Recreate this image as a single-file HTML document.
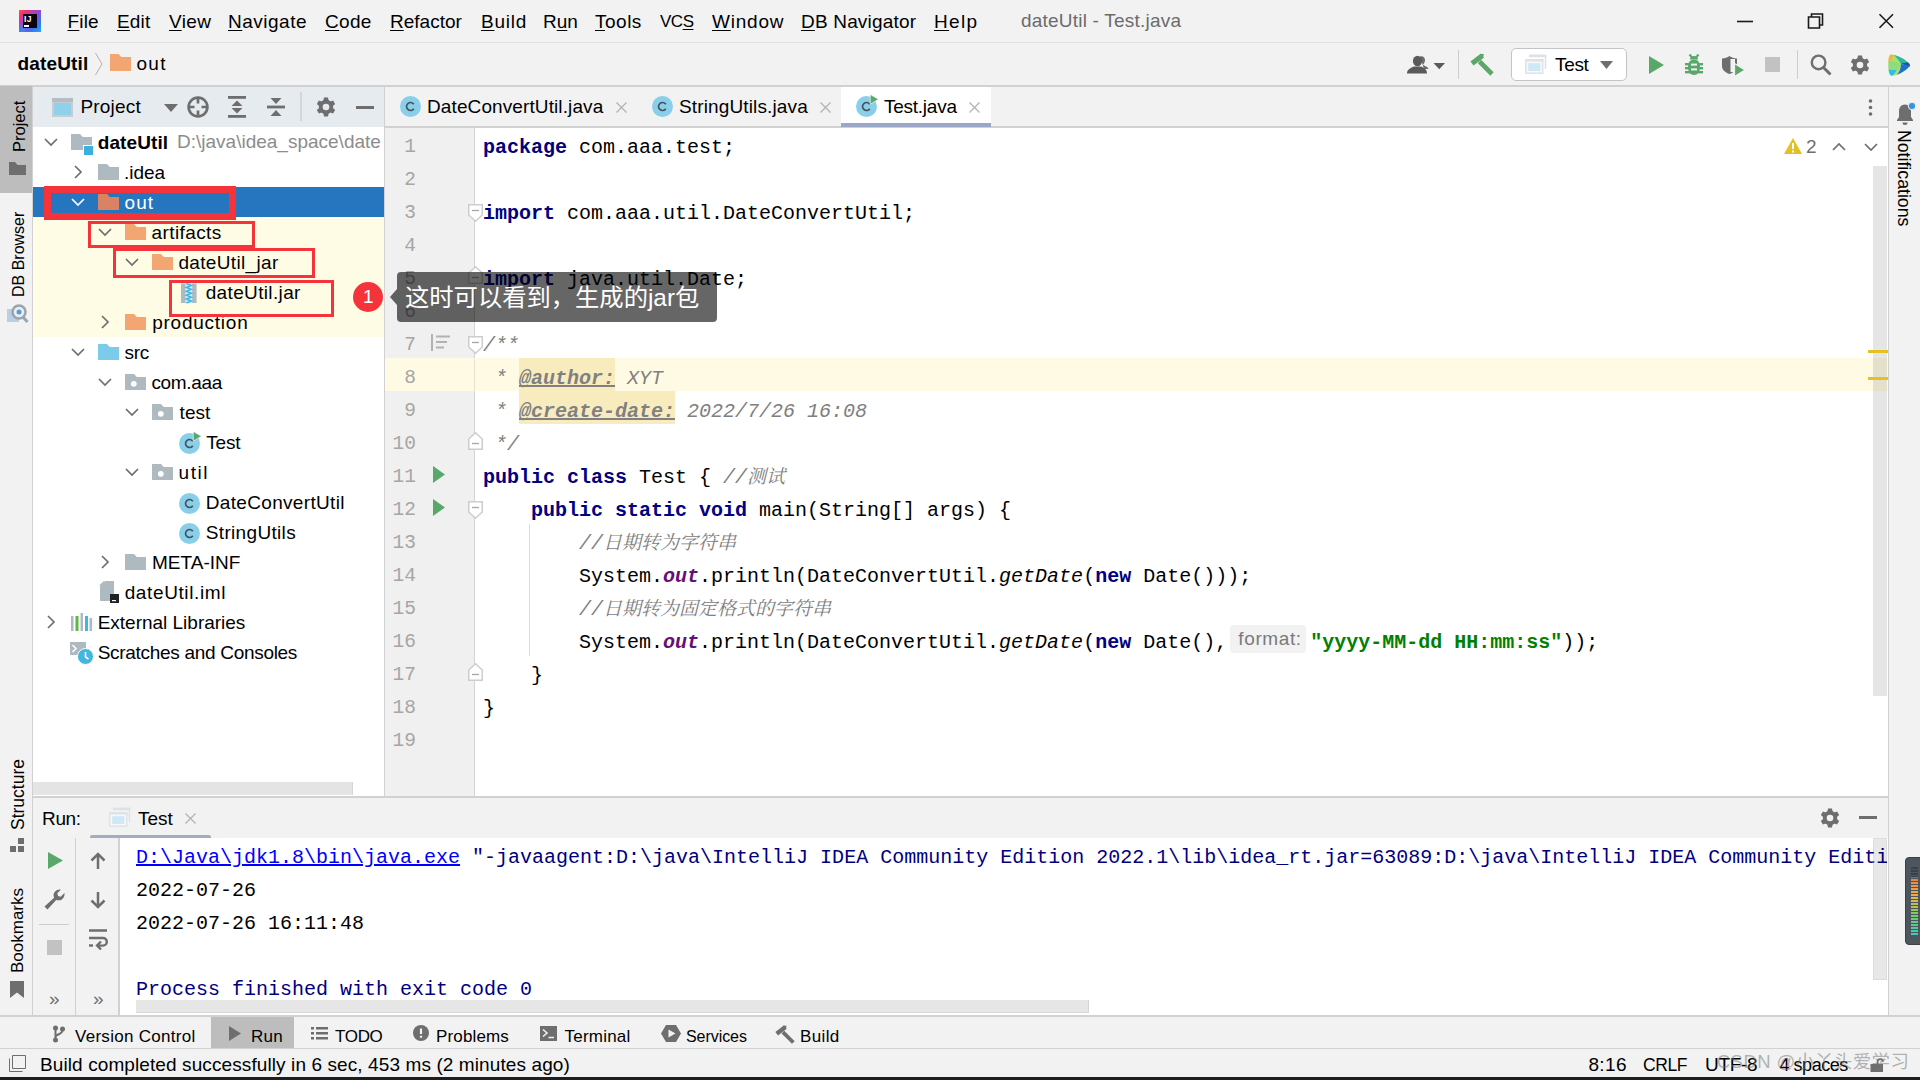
<!DOCTYPE html>
<html><head><meta charset="utf-8"><title>dateUtil - Test.java</title>
<style>
*{box-sizing:border-box;margin:0;padding:0}
html,body{width:1920px;height:1080px;overflow:hidden;background:#f2f2f2}
body{position:relative;font-family:"Liberation Sans","Noto Sans CJK SC",sans-serif;color:#000;font-size:18px}
.t{position:absolute;white-space:pre;display:block}
.a{position:absolute;display:block}
.b{font-weight:bold}
.g{color:#8c8c8c}
u{text-decoration:underline;text-underline-offset:2px;text-decoration-thickness:1px}
.mono{font-family:"Liberation Mono","Noto Sans Mono CJK SC","Noto Sans CJK SC",monospace}
.code{position:absolute;left:483px;white-space:pre;font-family:"Liberation Mono","Noto Sans Mono CJK SC",monospace;font-size:20px;height:33px;line-height:33px;color:#000}
.code b{color:#000080}
.code i{color:#808080}
.code .s{color:#008000;font-weight:bold}
.code .f{color:#660e7a;font-weight:bold;font-style:italic}
.code .cj{font-family:"Noto Serif CJK SC","Noto Sans CJK SC",serif;font-size:19px;line-height:1px}
.ln{position:absolute;width:30px;left:386px;text-align:right;font-family:"Liberation Mono",monospace;font-size:19.500px;height:33px;line-height:33px;color:#a6a6a6}
.con{position:absolute;left:136px;white-space:pre;font-family:"Liberation Mono",monospace;font-size:20px;height:33px;line-height:33px;color:#000}
.v{position:absolute;white-space:pre;transform-origin:0 0;font-size:17px;height:22px;line-height:22px}
svg{position:absolute;display:block;overflow:visible}
</style></head><body>

<div class="a" style="left:0;top:42px;width:1920px;height:1px;background:#e0e0e0"></div>
<div class="a" style="left:0;top:85px;width:1920px;height:2px;background:#d1d1d1"></div>
<div class="a" style="left:0;top:87px;width:32px;height:929px;background:#f2f2f2"></div>
<div class="a" style="left:0;top:87px;width:32px;height:94px;background:#bdbdbd"></div>
<div class="a" style="left:32px;top:87px;width:1px;height:929px;background:#d1d1d1"></div>
<div class="a" style="left:33px;top:87px;width:351px;height:40px;background:#e6ebf0"></div>
<div class="a" style="left:33px;top:127px;width:351px;height:669px;background:#fff"></div>
<div class="a" style="left:384px;top:87px;width:1px;height:710px;background:#d1d1d1"></div>
<div class="a" style="left:385px;top:87px;width:1503px;height:40px;background:#f2f2f2"></div>
<div class="a" style="left:385px;top:126px;width:1503px;height:2px;background:#d1d1d1"></div>
<div class="a" style="left:385px;top:128px;width:1503px;height:668px;background:#fff"></div>
<div class="a" style="left:385px;top:128px;width:89px;height:668px;background:#f0f0f0"></div>
<div class="a" style="left:474px;top:128px;width:1px;height:668px;background:#d4d4d4"></div>
<div class="a" style="left:1888px;top:87px;width:1px;height:929px;background:#d1d1d1"></div>
<div class="a" style="left:33px;top:796px;width:1855px;height:2px;background:#d1d1d1"></div>
<div class="a" style="left:33px;top:798px;width:1855px;height:40px;background:#f2f2f2"></div>
<div class="a" style="left:120px;top:838px;width:1768px;height:177px;background:#fff"></div>
<div class="a" style="left:75px;top:838px;width:1px;height:177px;background:#d1d1d1"></div>
<div class="a" style="left:118px;top:838px;width:2px;height:177px;background:#d1d1d1"></div>
<div class="a" style="left:0;top:1015px;width:1920px;height:2px;background:#d1d1d1"></div>
<div class="a" style="left:0;top:1048px;width:1920px;height:1px;background:#d1d1d1"></div>
<div class="a" style="left:0;top:1077px;width:1920px;height:3px;background:#1e1e1e"></div>
<div class="a" style="left:19px;top:10px;width:22px;height:22px;background:linear-gradient(135deg,#fd5a3c 0%,#f0307a 18%,#8b4bd8 50%,#2f7df2 78%,#27a6f2 100%)"></div>
<div class="a" style="left:19px;top:22px;width:6px;height:10px;background:linear-gradient(180deg,rgba(47,125,242,0),#2f8cf0)"></div>
<div class="a" style="left:22.500px;top:13.700px;width:14.500px;height:14.300px;background:#0c0410"></div>
<span id="lj" class="t b" style="left:24px;top:13.5px;height:10px;line-height:10px;font-size:8.5px;letter-spacing:0px;color:#fff;letter-spacing:0.300px">IJ</span>
<div class="a" style="left:24px;top:25.400px;width:5px;height:1.500px;background:#fff"></div>
<span id="m1" class="t " style="left:67.5px;top:7.0px;height:30px;line-height:30px;font-size:19px;letter-spacing:0.167px;"><u>F</u>ile</span>
<span id="m2" class="t " style="left:117.0px;top:7.0px;height:30px;line-height:30px;font-size:19px;letter-spacing:0.167px;"><u>E</u>dit</span>
<span id="m3" class="t " style="left:169.0px;top:7.0px;height:30px;line-height:30px;font-size:19px;letter-spacing:0.333px;"><u>V</u>iew</span>
<span id="m4" class="t " style="left:228.0px;top:7.0px;height:30px;line-height:30px;font-size:19px;letter-spacing:0.5px;"><u>N</u>avigate</span>
<span id="m5" class="t " style="left:325.0px;top:7.0px;height:30px;line-height:30px;font-size:19px;letter-spacing:0.333px;"><u>C</u>ode</span>
<span id="m6" class="t " style="left:390.0px;top:7.0px;height:30px;line-height:30px;font-size:19px;letter-spacing:0.0px;"><u>R</u>efactor</span>
<span id="m7" class="t " style="left:481.0px;top:7.0px;height:30px;line-height:30px;font-size:19px;letter-spacing:0.75px;"><u>B</u>uild</span>
<span id="m8" class="t " style="left:543.0px;top:7.0px;height:30px;line-height:30px;font-size:19px;letter-spacing:0.0px;">R<u>u</u>n</span>
<span id="m9" class="t " style="left:595.0px;top:7.0px;height:30px;line-height:30px;font-size:19px;letter-spacing:0.5px;"><u>T</u>ools</span>
<span id="m10" class="t " style="left:660.0px;top:7.0px;height:30px;line-height:30px;font-size:17px;letter-spacing:-0.5px;">VC<u>S</u></span>
<span id="m11" class="t " style="left:712.0px;top:7.0px;height:30px;line-height:30px;font-size:19px;letter-spacing:0.8px;"><u>W</u>indow</span>
<span id="m12" class="t " style="left:801.0px;top:7.0px;height:30px;line-height:30px;font-size:19px;letter-spacing:0.182px;"><u>D</u>B Navigator</span>
<span id="m13" class="t " style="left:934.0px;top:7.0px;height:30px;line-height:30px;font-size:19px;letter-spacing:1.333px;"><u>H</u>elp</span>
<span id="title" class="t " style="left:1021.0px;top:6.0px;height:30px;line-height:30px;font-size:19px;letter-spacing:0.211px;color:#6b6b6b">dateUtil - Test.java</span>
<svg style="left:1730px;top:8px" width="180" height="28" viewBox="0 0 180 28"><g fill="none" stroke="#1a1a1a" stroke-width="1.600"><path d="M7 13.500H23"/><path d="M78.500 9h11v11h-11z"/><path d="M81.500 9v-3h11v11h-3"/><path d="M149.500 6.200l13.500 13.500M163 6.200l-13.500 13.500"/></g></svg>
<span id="nav1" class="t b" style="left:17.5px;top:49.0px;height:30px;line-height:30px;font-size:19px;letter-spacing:0.143px;">dateUtil</span>
<svg style="left:94px;top:52px" width="10" height="24" viewBox="0 0 10 24"><path d="M1.5 1L8 12L1.5 23" fill="none" stroke="#b0b0b0" stroke-width="1"/></svg>
<svg style="left:109.500px;top:54px" width="21" height="17" viewBox="0 0 21 17"><path d="M0 0h8.500l2.800 3H21v14H0z" fill="#f4a672"/></svg>
<span id="nav2" class="t " style="left:136.5px;top:49.0px;height:30px;line-height:30px;font-size:19px;letter-spacing:1.25px;">out</span>
<svg style="left:1407px;top:55px" width="38" height="20" viewBox="0 0 38 20"><g fill="#6e6e6e"><path d="M13 1.500c2-1 5 0 5 3.500 0 2-1 3.500-2 4.500 2 2 5 2 5.500 4.500H17z"/></g><g fill="#5a5a5a"><ellipse cx="10.500" cy="6" rx="4.600" ry="5.200"/><path d="M0 18.500c0-4.500 4-5.500 7-7h7c3 1.500 6 2.500 6 7z"/><path d="M26.500 8h11.500l-5.750 6.200z"/></g></svg>
<div class="a" style="left:1458px;top:50px;width:1px;height:29px;background:#cdcdcd"></div>
<svg style="left:1469px;top:53px" width="26" height="24" viewBox="0 0 26 24"><g stroke="#59a869" fill="none"><path d="M3 10.500L13.500 2.500" stroke-width="5.200"/><path d="M10.500 8.500L23 21" stroke-width="4.600"/></g><path d="M11 1h4l-1 3z" fill="#59a869"/></svg>
<div class="a" style="left:1511px;top:48px;width:116px;height:33px;background:#fff;border:1px solid #c4c4c4;border-radius:5px"></div>
<svg style="left:1525px;top:54px" width="22" height="20" viewBox="0 0 22 20"><path d="M4.500 1.500H20.500V15" fill="none" stroke="#dde1e6" stroke-width="1.500"/><rect x="4" y="0.800" width="17.200" height="2.400" fill="#dde1e6"/><rect x="0.750" y="5.750" width="17" height="13.500" fill="#f7f8f9" stroke="#dfe3e8" stroke-width="1.500"/><rect x="0" y="5" width="18.500" height="2.600" fill="#dfe3e8"/><rect x="3.200" y="9.200" width="12.200" height="7.800" fill="#cfe8f5"/></svg>
<span id="tbtest" class="t " style="left:1555.0px;top:50.0px;height:30px;line-height:30px;font-size:19px;letter-spacing:-0.333px;">Test</span>
<svg style="left:1600px;top:61px" width="13" height="8" viewBox="0 0 13 8"><path d="M0 0h13l-6.500 8z" fill="#6e6e6e"/></svg>
<svg style="left:1649px;top:56px" width="15" height="18" viewBox="0 0 15 18"><path d="M0 0L15 9.0L0 18z" fill="#59a869"/></svg>
<svg style="left:1685px;top:54px" width="18" height="22" viewBox="0 0 18 22"><g fill="#59a869"><path d="M9 5.500c4 0 6 3 6 7.500s-2.500 8-6 8-6-3.500-6-8 2-7.500 6-7.500z"/><path d="M5 5.500a4 3.500 0 0 1 8 0z"/><rect x="0" y="9" width="18" height="2.400"/><rect x="0" y="13" width="18" height="2.400"/><rect x="0" y="17" width="18" height="2.400"/></g><g stroke="#59a869" stroke-width="2" fill="none"><path d="M4.500 0.500l2.500 3M13.500 0.500l-2.500 3"/></g><g fill="#f2f2f2"><rect x="6" y="9.600" width="6" height="2"/><rect x="6" y="14.400" width="6" height="2"/></g></svg>
<svg style="left:1722px;top:56px" width="24" height="22" viewBox="0 0 24 22"><path d="M0 2.500c3 0 5.500-1 7.500-2.500 2 1.500 4.500 2.500 7.500 2.500v7.500c0 4-3.500 6.500-7.500 8-4-1.500-7.500-4-7.500-8z" fill="#6e6e6e"/><path d="M8.500 3h4.500v13l-4.500 0z" fill="#f2f2f2"/><path d="M12.500 7.500L23 14 12.500 20.500z" fill="#59a869" stroke="#f2f2f2" stroke-width="1.200"/></svg>
<div class="a" style="left:1765px;top:57px;width:15px;height:15px;background:#c2c2c2"></div>
<div class="a" style="left:1797px;top:50px;width:1px;height:29px;background:#cdcdcd"></div>
<svg style="left:1810px;top:54px" width="22" height="22" viewBox="0 0 22 22"><circle cx="8.600" cy="8.400" r="6.800" fill="none" stroke="#6e6e6e" stroke-width="2.400"/><path d="M13.500 13.500l7 7" stroke="#6e6e6e" stroke-width="3"/></svg>
<svg style="left:1850px;top:55px" width="20" height="20" viewBox="0 0 20 20"><path d="M7.41 3.50L7.98 0.62L12.02 0.62L12.59 3.50L14.33 4.50L17.12 3.56L19.14 7.06L16.93 9.00L16.93 11.00L19.14 12.94L17.12 16.44L14.33 15.50L12.59 16.50L12.02 19.38L7.98 19.38L7.41 16.50L5.67 15.50L2.88 16.44L0.86 12.94L3.07 11.00L3.07 9.00L0.86 7.06L2.88 3.56L5.67 4.50z" fill="#6e6e6e"/><circle cx="10" cy="10" r="7.200" fill="#6e6e6e"/><circle cx="10" cy="10" r="3.300" fill="#f2f2f2"/></svg>
<svg style="left:1888px;top:54px" width="22" height="22" viewBox="0 0 22 22"><defs><clipPath id="lg"><path d="M3.500 0.500C10 1 18 6 21.500 10c0.500 0.800 0.500 1.500 0 2.200C18 17 9 21.500 4 21.800 1.500 21.500 0.500 19 0.500 11S1 1 3.500 0.500z"/></clipPath></defs><g clip-path="url(#lg)"><rect width="22" height="22" fill="#a6e06e"/><path d="M0 0h6l-3 7H0z" fill="#f5b33a"/><path d="M5 0h17v11L13 10C11 6 8 3 5 0z" fill="#2fb5a0"/><path d="M13 9.500L22 8v5z" fill="#1d4fb0"/><path d="M13 10l9 2v10H8c3-3 5-7 5-12z" fill="#1f6fd0"/><path d="M0 15c3 1 6 1 9 0-1 3-3 5-5 7H0z" fill="#35b8ea"/><path d="M0 7c4 0 9 1 13 3-1 3-3 5-5 6-3 0-6 0-8-1z" fill="#8fdc7c"/></g></svg>
<div class="a" style="left:0;top:86px;width:32px;height:107px;background:#bdbdbd"></div>
<span id="vproj" class="v" style="left:8px;top:152px;transform:rotate(-90deg);font-size:16.5px;letter-spacing:0px;">Project</span>
<svg style="left:9px;top:162px" width="17" height="13" viewBox="0 0 17 13"><path d="M0 0h6l2.500 3H17v10H0z" fill="#6e6e6e"/></svg>
<span id="vdb" class="v" style="left:8px;top:297px;transform:rotate(-90deg);font-size:16px;letter-spacing:0px;">DB Browser</span>
<svg style="left:7px;top:303px" width="21" height="21" viewBox="0 0 21 21"><rect x="0" y="6" width="12" height="13" fill="#b9cfe6"/><circle cx="12" cy="9" r="6.500" fill="#e8eef5" stroke="#9aa4ae" stroke-width="2.500"/><circle cx="12" cy="9" r="2.500" fill="#5b9bd5"/><path d="M16 14l4.500 5" stroke="#9aa4ae" stroke-width="3"/></svg>
<span id="vstruct" class="v" style="left:7px;top:830px;transform:rotate(-90deg);font-size:17.5px;letter-spacing:0px;">Structure</span>
<svg style="left:10px;top:838px" width="15" height="15" viewBox="0 0 15 15"><g fill="#6e6e6e"><rect x="8" y="0" width="6" height="6"/><rect x="0" y="8" width="6" height="6"/><rect x="8" y="8" width="6" height="6"/></g></svg>
<span id="vbook" class="v" style="left:7px;top:973px;transform:rotate(-90deg);font-size:17px;letter-spacing:0px;">Bookmarks</span>
<svg style="left:10px;top:981px" width="14" height="17" viewBox="0 0 14 17"><path d="M0 0h14v17l-7-5.500-7 5.500z" fill="#6e6e6e"/></svg>
<svg style="left:52px;top:98px" width="21" height="19" viewBox="0 0 21 19"><rect x="0" y="0" width="21" height="19" fill="#c9cdd1"/><rect x="0" y="0" width="21" height="4" fill="#b4bcc4"/><rect x="2" y="5" width="17" height="12" fill="#8fd1ea"/></svg>
<span id="ph" class="t " style="left:80.5px;top:92.0px;height:30px;line-height:30px;font-size:19px;letter-spacing:0.183px;">Project</span>
<svg style="left:164px;top:104px" width="14" height="8" viewBox="0 0 14 8"><path d="M0 0h14l-7 8z" fill="#6e6e6e"/></svg>
<svg style="left:187px;top:96px" width="22" height="22" viewBox="0 0 22 22"><circle cx="11" cy="11" r="9.400" fill="none" stroke="#6e6e6e" stroke-width="2.700"/><path d="M11 1v6.500M11 14.500v6.500M1 11h6.500M14.500 11h6.500" stroke="#6e6e6e" stroke-width="2.700"/></svg>
<svg style="left:228px;top:96px" width="18" height="22" viewBox="0 0 18 22"><g fill="#6e6e6e"><rect x="0" y="0" width="18" height="2.800"/><rect x="0" y="19" width="18" height="2.800"/><path d="M9 4.500l5.500 5.500h-11z"/><path d="M9 17.500l5.500-5.500h-11z"/></g></svg>
<svg style="left:267px;top:96px" width="18" height="22" viewBox="0 0 18 22"><g fill="#6e6e6e"><rect x="0" y="9.600" width="18" height="2.800"/><path d="M9 8l5.500-6h-11z"/><path d="M9 14l5.500 6h-11z"/></g></svg>
<div class="a" style="left:300px;top:92px;width:2px;height:29px;background:#d3d7dc"></div>
<svg style="left:316px;top:97px" width="20" height="20" viewBox="0 0 20 20"><path d="M7.41 3.50L7.98 0.62L12.02 0.62L12.59 3.50L14.33 4.50L17.12 3.56L19.14 7.06L16.93 9.00L16.93 11.00L19.14 12.94L17.12 16.44L14.33 15.50L12.59 16.50L12.02 19.38L7.98 19.38L7.41 16.50L5.67 15.50L2.88 16.44L0.86 12.94L3.07 11.00L3.07 9.00L0.86 7.06L2.88 3.56L5.67 4.50z" fill="#6e6e6e"/><circle cx="10" cy="10" r="7.200" fill="#6e6e6e"/><circle cx="10" cy="10" r="3.300" fill="#e6ebf0"/></svg>
<div class="a" style="left:356px;top:105.500px;width:18px;height:3px;background:#6e6e6e"></div>
<div class="a" style="left:33px;top:187px;width:351px;height:30px;background:#2675bf"></div>
<div class="a" style="left:33px;top:217px;width:351px;height:120px;background:#fffce6"></div>
<svg style="left:44px;top:138px" width="14" height="9" viewBox="0 0 14 9"><path d="M1 1l6 6 6-6" fill="none" stroke="#6e6e6e" stroke-width="1.700"/></svg><svg style="left:70.5px;top:134px" width="21" height="16" viewBox="0 0 21 16"><path d="M0 0h9l2.800 3H21v13H0z" fill="#aeb9c0"/></svg><div class="a" style="left:83px;top:145px;width:11px;height:11px;background:#3bb0dc;border:1px solid #fff"></div><span id="t0" class="t b" style="left:97.7px;top:127.6px;height:30px;line-height:30px;font-size:19px;letter-spacing:0.1px;">dateUtil</span>
<span id="t0p" class="t " style="left:177px;top:127.0px;height:30px;line-height:30px;font-size:19px;letter-spacing:0px;color:#8c8c8c;width:206px;overflow:hidden">D:\java\idea_space\date</span>
<svg style="left:74px;top:165px" width="9" height="14" viewBox="0 0 9 14"><path d="M1 1l6 6-6 6" fill="none" stroke="#6e6e6e" stroke-width="1.700"/></svg><svg style="left:97.5px;top:164px" width="21" height="16" viewBox="0 0 21 16"><path d="M0 0h9l2.800 3H21v13H0z" fill="#aeb9c0"/></svg><span id="t1" class="t " style="left:124.0px;top:157.6px;height:30px;line-height:30px;font-size:19px;letter-spacing:-0.025px;">.idea</span>
<svg style="left:71px;top:198px" width="14" height="9" viewBox="0 0 14 9"><path d="M1 1l6 6 6-6" fill="none" stroke="#fff" stroke-width="1.700"/></svg><svg style="left:97.5px;top:194px" width="21" height="16" viewBox="0 0 21 16"><path d="M0 0h9l2.800 3H21v13H0z" fill="#d98264"/></svg><span id="t2" class="t " style="left:124.6px;top:187.6px;height:30px;line-height:30px;font-size:19px;letter-spacing:1.0px;color:#fff">out</span>
<svg style="left:98px;top:228px" width="14" height="9" viewBox="0 0 14 9"><path d="M1 1l6 6 6-6" fill="none" stroke="#6e6e6e" stroke-width="1.700"/></svg><svg style="left:124.5px;top:224px" width="21" height="16" viewBox="0 0 21 16"><path d="M0 0h9l2.800 3H21v13H0z" fill="#f4a672"/></svg><span id="t3" class="t " style="left:151.6px;top:217.6px;height:30px;line-height:30px;font-size:19px;letter-spacing:0.387px;">artifacts</span>
<svg style="left:125px;top:258px" width="14" height="9" viewBox="0 0 14 9"><path d="M1 1l6 6 6-6" fill="none" stroke="#6e6e6e" stroke-width="1.700"/></svg><svg style="left:151.5px;top:254px" width="21" height="16" viewBox="0 0 21 16"><path d="M0 0h9l2.800 3H21v13H0z" fill="#f4a672"/></svg><span id="t4" class="t " style="left:178.4px;top:247.60000000000002px;height:30px;line-height:30px;font-size:19px;letter-spacing:0.345px;">dateUtil_jar</span>
<svg style="left:181.2px;top:283px" width="15.600" height="20.500" viewBox="0 0 16 20"><rect width="16" height="20" fill="#aeb9c0"/><rect x="4.500" width="7" height="20" fill="#cfeefa"/><path d="M5.500 0l5 2-5 2 5 2-5 2 5 2-5 2 5 2-5 2 5 2-5 2" stroke="#40b6e0" stroke-width="1.600" fill="none"/></svg><span id="t5" class="t " style="left:205.7px;top:277.6px;height:30px;line-height:30px;font-size:19px;letter-spacing:0.355px;">dateUtil.jar</span>
<svg style="left:101px;top:315px" width="9" height="14" viewBox="0 0 9 14"><path d="M1 1l6 6-6 6" fill="none" stroke="#6e6e6e" stroke-width="1.700"/></svg><svg style="left:124.5px;top:314px" width="21" height="16" viewBox="0 0 21 16"><path d="M0 0h9l2.800 3H21v13H0z" fill="#f4a672"/></svg><span id="t6" class="t " style="left:152.2px;top:307.6px;height:30px;line-height:30px;font-size:19px;letter-spacing:0.756px;">production</span>
<svg style="left:71px;top:348px" width="14" height="9" viewBox="0 0 14 9"><path d="M1 1l6 6 6-6" fill="none" stroke="#6e6e6e" stroke-width="1.700"/></svg><svg style="left:97.5px;top:344px" width="21" height="16" viewBox="0 0 21 16"><path d="M0 0h9l2.800 3H21v13H0z" fill="#7ccbeb"/></svg><span id="t7" class="t " style="left:124.6px;top:337.6px;height:30px;line-height:30px;font-size:19px;letter-spacing:-0.35px;">src</span>
<svg style="left:98px;top:378px" width="14" height="9" viewBox="0 0 14 9"><path d="M1 1l6 6 6-6" fill="none" stroke="#6e6e6e" stroke-width="1.700"/></svg><svg style="left:124.5px;top:374px" width="21" height="16" viewBox="0 0 21 16"><path d="M0 0h9l2.800 3H21v13H0z" fill="#aeb9c0"/><circle cx="8.800" cy="9.800" r="2.900" fill="#fff"/></svg><span id="t8" class="t " style="left:151.4px;top:367.6px;height:30px;line-height:30px;font-size:19px;letter-spacing:-0.333px;">com.aaa</span>
<svg style="left:125px;top:408px" width="14" height="9" viewBox="0 0 14 9"><path d="M1 1l6 6 6-6" fill="none" stroke="#6e6e6e" stroke-width="1.700"/></svg><svg style="left:151.5px;top:404px" width="21" height="16" viewBox="0 0 21 16"><path d="M0 0h9l2.800 3H21v13H0z" fill="#aeb9c0"/><circle cx="8.800" cy="9.800" r="2.900" fill="#fff"/></svg><span id="t9" class="t " style="left:179.6px;top:397.6px;height:30px;line-height:30px;font-size:19px;letter-spacing:0.033px;">test</span>
<svg style="left:178.5px;top:432.5px" width="21" height="21" viewBox="0 0 21 21"><circle cx="10.500" cy="10.500" r="10.500" fill="#89cfea"/><path d="M13.800 12.800a4 4 0 1 1 0-4.600" fill="none" stroke="#45525c" stroke-width="1.700"/><path d="M14.300 -1.500l8.200 4.800-8.200 4.800z" fill="#59a869" stroke="#fff" stroke-width="0.800" stroke-opacity="0.700"/></svg><span id="t10" class="t " style="left:206.2px;top:427.6px;height:30px;line-height:30px;font-size:19px;letter-spacing:-0.167px;">Test</span>
<svg style="left:125px;top:468px" width="14" height="9" viewBox="0 0 14 9"><path d="M1 1l6 6 6-6" fill="none" stroke="#6e6e6e" stroke-width="1.700"/></svg><svg style="left:151.5px;top:464px" width="21" height="16" viewBox="0 0 21 16"><path d="M0 0h9l2.800 3H21v13H0z" fill="#aeb9c0"/><circle cx="8.800" cy="9.800" r="2.900" fill="#fff"/></svg><span id="t11" class="t " style="left:178.6px;top:457.6px;height:30px;line-height:30px;font-size:19px;letter-spacing:1.533px;">util</span>
<svg style="left:178.5px;top:492.5px" width="21" height="21" viewBox="0 0 21 21"><circle cx="10.500" cy="10.500" r="10.500" fill="#89cfea"/><path d="M13.800 12.800a4 4 0 1 1 0-4.600" fill="none" stroke="#45525c" stroke-width="1.700"/></svg><span id="t12" class="t " style="left:205.8px;top:487.6px;height:30px;line-height:30px;font-size:19px;letter-spacing:0.321px;">DateConvertUtil</span>
<svg style="left:178.5px;top:522.5px" width="21" height="21" viewBox="0 0 21 21"><circle cx="10.500" cy="10.500" r="10.500" fill="#89cfea"/><path d="M13.800 12.800a4 4 0 1 1 0-4.600" fill="none" stroke="#45525c" stroke-width="1.700"/></svg><span id="t13" class="t " style="left:205.8px;top:517.6px;height:30px;line-height:30px;font-size:19px;letter-spacing:0.33px;">StringUtils</span>
<svg style="left:101px;top:555px" width="9" height="14" viewBox="0 0 9 14"><path d="M1 1l6 6-6 6" fill="none" stroke="#6e6e6e" stroke-width="1.700"/></svg><svg style="left:124.5px;top:554px" width="21" height="16" viewBox="0 0 21 16"><path d="M0 0h9l2.800 3H21v13H0z" fill="#aeb9c0"/></svg><span id="t14" class="t " style="left:152.0px;top:547.6px;height:30px;line-height:30px;font-size:19px;letter-spacing:0.014px;">META-INF</span>
<svg style="left:99px;top:581px" width="20" height="22" viewBox="0 0 20 22"><path d="M6 0h9v20H1V5z" fill="#aeb9c0"/><path d="M0 4.500L5 0v4.500z" fill="#aeb9c0"/><rect x="11" y="13" width="9" height="9" fill="#222"/><rect x="13" y="19" width="4" height="1.200" fill="#fff"/></svg><span id="t15" class="t " style="left:124.7px;top:577.6px;height:30px;line-height:30px;font-size:19px;letter-spacing:0.618px;">dateUtil.iml</span>
<svg style="left:47px;top:615px" width="9" height="14" viewBox="0 0 9 14"><path d="M1 1l6 6-6 6" fill="none" stroke="#6e6e6e" stroke-width="1.700"/></svg><svg style="left:70px;top:613px" width="22" height="18" viewBox="0 0 22 18"><g><rect x="1" y="3" width="2.500" height="15" fill="#aeb9c0"/><rect x="5.500" y="3" width="3" height="15" fill="#62b543"/><rect x="10.500" y="0" width="2.500" height="18" fill="#aeb9c0"/><rect x="15" y="3" width="3" height="15" fill="#40b6e0"/><rect x="19.500" y="5" width="2.500" height="13" fill="#aeb9c0"/></g></svg><span id="t16" class="t " style="left:97.7px;top:607.6px;height:30px;line-height:30px;font-size:19px;letter-spacing:-0.012px;">External Libraries</span>
<svg style="left:70px;top:641px" width="24" height="24" viewBox="0 0 24 24"><rect x="0" y="1" width="16" height="13" fill="#aeb9c0"/><path d="M2.500 4l3.500 3.500-3.500 3.500" fill="none" stroke="#fff" stroke-width="1.500"/><circle cx="15.500" cy="15.500" r="8" fill="#40b6e0" stroke="#fff" stroke-width="1"/><path d="M15.500 11v5l3 2" fill="none" stroke="#fff" stroke-width="1.600"/></svg><span id="t17" class="t " style="left:97.7px;top:637.6px;height:30px;line-height:30px;font-size:19px;letter-spacing:-0.3px;">Scratches and Consoles</span>
<div class="a" style="left:33px;top:782px;width:320px;height:13px;background:#e4e4e4;border-right:1px solid #d6d6d6"></div>
<div class="a" style="left:841px;top:87px;width:150px;height:40px;background:#fff"></div>
<div class="a" style="left:841px;top:123px;width:150px;height:4px;background:#9aa7c7"></div>
<svg style="left:399.5px;top:96px" width="21" height="21" viewBox="0 0 21 21"><circle cx="10.500" cy="10.500" r="10.500" fill="#89cfea"/><path d="M13.800 12.800a4 4 0 1 1 0-4.600" fill="none" stroke="#45525c" stroke-width="1.700"/></svg>
<span id="tab1" class="t " style="left:427.0px;top:92.0px;height:30px;line-height:30px;font-size:19px;letter-spacing:0.105px;">DateConvertUtil.java</span>
<svg style="left:616px;top:102px" width="11" height="11" viewBox="0 0 11 11"><path d="M0.500 0.500l10 10M10.500 0.500l-10 10" stroke="#b3b3b3" stroke-width="1.300" fill="none"/></svg>
<svg style="left:651.5px;top:96px" width="21" height="21" viewBox="0 0 21 21"><circle cx="10.500" cy="10.500" r="10.500" fill="#89cfea"/><path d="M13.800 12.800a4 4 0 1 1 0-4.600" fill="none" stroke="#45525c" stroke-width="1.700"/></svg>
<span id="tab2" class="t " style="left:679.0px;top:92.0px;height:30px;line-height:30px;font-size:19px;letter-spacing:0.133px;">StringUtils.java</span>
<svg style="left:820px;top:102px" width="11" height="11" viewBox="0 0 11 11"><path d="M0.500 0.500l10 10M10.500 0.500l-10 10" stroke="#b3b3b3" stroke-width="1.300" fill="none"/></svg>
<svg style="left:855.5px;top:96px" width="21" height="21" viewBox="0 0 21 21"><circle cx="10.500" cy="10.500" r="10.500" fill="#89cfea"/><path d="M13.800 12.800a4 4 0 1 1 0-4.600" fill="none" stroke="#45525c" stroke-width="1.700"/><path d="M14.300 -1.500l8.200 4.800-8.200 4.800z" fill="#59a869" stroke="#fff" stroke-width="0.800" stroke-opacity="0.700"/></svg>
<span id="tab3" class="t " style="left:884.0px;top:92.0px;height:30px;line-height:30px;font-size:19px;letter-spacing:-0.25px;">Test.java</span>
<svg style="left:969px;top:102px" width="11" height="11" viewBox="0 0 11 11"><path d="M0.500 0.500l10 10M10.500 0.500l-10 10" stroke="#b3b3b3" stroke-width="1.300" fill="none"/></svg>
<svg style="left:1868px;top:99px" width="5" height="17" viewBox="0 0 5 17"><g fill="#6e6e6e"><circle cx="2.500" cy="2" r="1.800"/><circle cx="2.500" cy="8.500" r="1.800"/><circle cx="2.500" cy="15" r="1.800"/></g></svg>
<div class="a" style="left:385px;top:358.4px;width:1503px;height:32.600px;background:#fffae3"></div>
<div class="a" style="left:474px;top:359px;width:1px;height:33px;background:#e6e2cf"></div>
<div class="a" style="left:519px;top:358.4px;width:96px;height:32.600px;background:#f8ecbf"></div>
<div class="a" style="left:519px;top:391px;width:156px;height:33px;background:#f8ecbf"></div>
<span class="ln" style="top:131px">1</span>
<span class="ln" style="top:164px">2</span>
<span class="ln" style="top:197px">3</span>
<span class="ln" style="top:230px">4</span>
<span class="ln" style="top:263px">5</span>
<span class="ln" style="top:296px">6</span>
<span class="ln" style="top:329px">7</span>
<span class="ln" style="top:362px">8</span>
<span class="ln" style="top:395px">9</span>
<span class="ln" style="top:428px">10</span>
<span class="ln" style="top:461px">11</span>
<span class="ln" style="top:494px">12</span>
<span class="ln" style="top:527px">13</span>
<span class="ln" style="top:560px">14</span>
<span class="ln" style="top:593px">15</span>
<span class="ln" style="top:626px">16</span>
<span class="ln" style="top:659px">17</span>
<span class="ln" style="top:692px">18</span>
<span class="ln" style="top:725px">19</span>
<div class="code" style="top:131px"><b>package</b> com.aaa.test;</div>
<div class="code" style="top:197px"><b>import</b> com.aaa.util.DateConvertUtil;</div>
<div class="code" style="top:263px"><b>import</b> java.util.Date;</div>
<div class="code" style="top:329px"><i>/**</i></div>
<div class="code" style="top:362px"><i> * <b style="color:#808080;text-decoration:underline;text-decoration-skip-ink:none">@author:</b> XYT</i></div>
<div class="code" style="top:395px"><i> * <b style="color:#808080;text-decoration:underline;text-decoration-skip-ink:none">@create-date:</b> 2022/7/26 16:08</i></div>
<div class="code" style="top:428px"><i> */</i></div>
<div class="code" style="top:461px"><b>public class</b> Test { <i>//<span class="cj">测试</span></i></div>
<div class="code" style="top:494px">    <b>public static void</b> main(String[] args) {</div>
<div class="code" style="top:527px">        <i>//<span class="cj">日期转为字符串</span></i></div>
<div class="code" style="top:560px">        System.<span class="f">out</span>.println(DateConvertUtil.<em>getDate</em>(<b>new</b> Date()));</div>
<div class="code" style="top:593px">        <i>//<span class="cj">日期转为固定格式的字符串</span></i></div>
<div class="code" style="top:626px">        System.<span class="f">out</span>.println(DateConvertUtil.<em>getDate</em>(<b>new</b> Date(),<span style="display:inline-block;width:83px"></span><span class="s">"yyyy-MM-dd HH:mm:ss"</span>));</div>
<div class="code" style="top:659px">    }</div>
<div class="code" style="top:692px">}</div>
<div class="a" style="left:1230px;top:625px;width:76px;height:28px;background:#f2f2f2;border-radius:4px"></div>
<span id="hint" class="t " style="left:1238.3px;top:624.0px;height:30px;line-height:30px;font-size:19px;letter-spacing:0.617px;color:#7a7a7a">format:</span>
<svg style="left:433px;top:466px" width="12" height="17" viewBox="0 0 12 17"><path d="M0 0L12 8.5L0 17z" fill="#59a869"/></svg>
<svg style="left:433px;top:499px" width="12" height="17" viewBox="0 0 12 17"><path d="M0 0L12 8.5L0 17z" fill="#59a869"/></svg>
<svg style="left:468px;top:204px" width="15" height="18" viewBox="0 0 15 18"><path d="M0.750 0.750h13.500v10.200l-6.750 6.300-6.750-6.300z" fill="#fff" stroke="#cdcdcd" stroke-width="1.500"/><path d="M4 6.500h7" stroke="#a6a6a6" stroke-width="1.300"/></svg>
<svg style="left:468px;top:266px" width="15" height="18" viewBox="0 0 15 18"><path d="M0.750 17.250h13.500V7.050l-6.750-6.300-6.750 6.300z" fill="#fff" stroke="#cdcdcd" stroke-width="1.500"/><path d="M4 11.500h7" stroke="#a6a6a6" stroke-width="1.300"/></svg>
<svg style="left:468px;top:336px" width="15" height="18" viewBox="0 0 15 18"><path d="M0.750 0.750h13.500v10.200l-6.750 6.300-6.750-6.300z" fill="#fff" stroke="#cdcdcd" stroke-width="1.500"/><path d="M4 6.500h7" stroke="#a6a6a6" stroke-width="1.300"/></svg>
<svg style="left:468px;top:432px" width="15" height="18" viewBox="0 0 15 18"><path d="M0.750 17.250h13.500V7.050l-6.750-6.300-6.750 6.300z" fill="#fff" stroke="#cdcdcd" stroke-width="1.500"/><path d="M4 11.500h7" stroke="#a6a6a6" stroke-width="1.300"/></svg>
<svg style="left:468px;top:501px" width="15" height="18" viewBox="0 0 15 18"><path d="M0.750 0.750h13.500v10.200l-6.750 6.300-6.750-6.300z" fill="#fff" stroke="#cdcdcd" stroke-width="1.500"/><path d="M4 6.500h7" stroke="#a6a6a6" stroke-width="1.300"/></svg>
<svg style="left:468px;top:663px" width="15" height="18" viewBox="0 0 15 18"><path d="M0.750 17.250h13.500V7.050l-6.750-6.300-6.750 6.300z" fill="#fff" stroke="#cdcdcd" stroke-width="1.500"/><path d="M4 11.500h7" stroke="#a6a6a6" stroke-width="1.300"/></svg>
<svg style="left:431px;top:334px" width="20" height="17" viewBox="0 0 20 17"><g stroke="#b2b2b2" stroke-width="2" fill="none"><path d="M1 0v17M5 2.500h14M5 8h11M5 13.500h8"/></g></svg>
<div class="a" style="left:529px;top:524px;width:1px;height:132px;background:#dcdcdc"></div>
<svg style="left:1784px;top:138px" width="18" height="16" viewBox="0 0 18 16"><path d="M9 0l9 16H0z" fill="#e5c023"/><path d="M9 5v6M9 12.500v2" stroke="#fff" stroke-width="2"/></svg>
<span id="warn" class="t " style="left:1806px;top:132.0px;height:30px;line-height:30px;font-size:19px;letter-spacing:0px;color:#6e6e6e">2</span>
<svg style="left:1832px;top:143px" width="14" height="9" viewBox="0 0 14 9"><path d="M1 1l6 6 6-6" fill="none" stroke="#6e6e6e" stroke-width="1.700"/></svg>
<svg style="left:1832px;top:142px" width="14" height="9" viewBox="0 0 14 9"><rect width="14" height="9" fill="#fff"/><path d="M1 8l6-6 6 6" fill="none" stroke="#6e6e6e" stroke-width="1.700"/></svg>
<svg style="left:1864px;top:143px" width="14" height="9" viewBox="0 0 14 9"><path d="M1 1l6 6 6-6" fill="none" stroke="#6e6e6e" stroke-width="1.700"/></svg>
<div class="a" style="left:1873px;top:166px;width:14px;height:530px;background:rgba(0,0,0,0.1)"></div>
<div class="a" style="left:1868px;top:350px;width:20px;height:3px;background:#e5c023"></div>
<div class="a" style="left:1868px;top:377px;width:20px;height:3px;background:#e5c023"></div>
<svg style="left:1897px;top:102px" width="20" height="24" viewBox="0 0 20 24"><path d="M8 2.500c-3.500 0-6 2.800-6 6.500v6l-2 3v1h16v-1l-2-3V9c0-3.700-2.500-6.500-6-6.500z" fill="#6e6e6e"/><path d="M5.500 20.500h5a2.500 2.500 0 0 1-5 0z" fill="#6e6e6e"/><circle cx="15" cy="4" r="3.700" fill="#3592e4" stroke="#f2f2f2" stroke-width="1"/></svg>
<span id="vnotif" class="v" style="left:1915px;top:130px;transform:rotate(90deg);font-size:17.7px;letter-spacing:0px;">Notifications</span>
<div class="a" style="left:44px;top:186px;width:192px;height:34px;border:7px solid #f5333a"></div>
<div class="a" style="left:88px;top:221px;width:167px;height:27px;border:3px solid #f5333a"></div>
<div class="a" style="left:113px;top:248px;width:202px;height:30px;border:3px solid #f5333a"></div>
<div class="a" style="left:169px;top:280px;width:165px;height:37px;border:3px solid #f5333a"></div>
<div class="a" style="left:353px;top:282px;width:30px;height:30px;border-radius:15px;background:#f5333a"></div>
<span id="one" class="t " style="left:363px;top:282.0px;height:30px;line-height:30px;font-size:19px;letter-spacing:0px;color:#fff">1</span>
<svg style="left:390px;top:289px" width="7" height="16" viewBox="0 0 7 16"><path d="M7 0v16L0 8z" fill="rgba(0,0,0,0.600)"/></svg>
<div class="a" style="left:397px;top:272px;width:320px;height:50px;background:rgba(0,0,0,0.600);border-radius:4px"></div>
<span id="tip" class="t " style="left:405px;top:278.0px;height:40px;line-height:40px;font-size:24.3px;letter-spacing:0px;color:#fff;font-family:'Liberation Sans','Noto Sans CJK SC',sans-serif">这时可以看到，生成的jar包</span>
<span id="runl" class="t " style="left:42.0px;top:804.0px;height:30px;line-height:30px;font-size:19px;letter-spacing:-0.333px;">Run:</span>
<svg style="left:109px;top:807px" width="22" height="20" viewBox="0 0 22 20"><path d="M4.500 1.500H20.500V15" fill="none" stroke="#dde1e6" stroke-width="1.500"/><rect x="4" y="0.800" width="17.200" height="2.400" fill="#dde1e6"/><rect x="0.750" y="5.750" width="17" height="13.500" fill="#f7f8f9" stroke="#dfe3e8" stroke-width="1.500"/><rect x="0" y="5" width="18.500" height="2.600" fill="#dfe3e8"/><rect x="3.200" y="9.200" width="12.200" height="7.800" fill="#cfe8f5"/></svg>
<span id="runt" class="t " style="left:138.0px;top:804.0px;height:30px;line-height:30px;font-size:19px;letter-spacing:0.0px;">Test</span>
<svg style="left:185px;top:813px" width="11" height="11" viewBox="0 0 11 11"><path d="M0.500 0.500l10 10M10.500 0.500l-10 10" stroke="#b3b3b3" stroke-width="1.300" fill="none"/></svg>
<div class="a" style="left:90px;top:834.500px;width:121px;height:3.500px;background:#a4adc0;border-radius:2px 2px 0 0"></div>
<svg style="left:1820px;top:808px" width="20" height="20" viewBox="0 0 20 20"><path d="M7.41 3.50L7.98 0.62L12.02 0.62L12.59 3.50L14.33 4.50L17.12 3.56L19.14 7.06L16.93 9.00L16.93 11.00L19.14 12.94L17.12 16.44L14.33 15.50L12.59 16.50L12.02 19.38L7.98 19.38L7.41 16.50L5.67 15.50L2.88 16.44L0.86 12.94L3.07 11.00L3.07 9.00L0.86 7.06L2.88 3.56L5.67 4.50z" fill="#6e6e6e"/><circle cx="10" cy="10" r="7.200" fill="#6e6e6e"/><circle cx="10" cy="10" r="3.300" fill="#f2f2f2"/></svg>
<div class="a" style="left:1859px;top:815.500px;width:18px;height:3px;background:#6e6e6e"></div>
<svg style="left:48px;top:852px" width="15" height="17" viewBox="0 0 15 17"><path d="M0 0L15 8.5L0 17z" fill="#59a869"/></svg>
<svg style="left:44px;top:889px" width="21" height="21" viewBox="0 0 21 21"><path d="M20.500 5.500a6 6 0 0 1-8.300 5.400L3.500 20.500 0.500 17.500l9.600-8.700A6 6 0 0 1 17 0.600l-3.700 3.700 0.800 2.600 2.600 0.800L20.400 4c0.100 0.500 0.100 1 0.100 1.500z" fill="#6e6e6e"/></svg>
<div class="a" style="left:39px;top:924px;width:30px;height:1px;background:#cdcdcd"></div>
<div class="a" style="left:47px;top:940px;width:15px;height:15px;background:#c2c2c2"></div>
<span id="gg1" class="t " style="left:49px;top:984.0px;height:30px;line-height:30px;font-size:19px;letter-spacing:0px;color:#6e6e6e">&#187;</span>
<span id="gg2" class="t " style="left:93px;top:984.0px;height:30px;line-height:30px;font-size:19px;letter-spacing:0px;color:#6e6e6e">&#187;</span>
<svg style="left:90px;top:852px" width="16" height="18" viewBox="0 0 16 18"><path d="M8 17V2M1.500 8.500L8 2l6.500 6.500" fill="none" stroke="#6e6e6e" stroke-width="2.500"/></svg>
<svg style="left:90px;top:891px" width="16" height="18" viewBox="0 0 16 18"><path d="M8 1v15M1.500 9.500L8 16l6.500-6.500" fill="none" stroke="#6e6e6e" stroke-width="2.500"/></svg>
<svg style="left:89px;top:929px" width="19" height="21" viewBox="0 0 19 21"><g fill="none" stroke="#6e6e6e" stroke-width="2.400"><path d="M0 1.500h18M0 9h14a3.800 3.800 0 0 1 0 7.600h-5M12 12.500l-4 4 4 4"/><path d="M0 16.500h4"/></g></svg>
<div class="con" style="top:841px;color:#00007f;width:1751px;overflow:hidden"><span style="color:#0000ff;text-decoration:underline">D:\Java\jdk1.8\bin\java.exe</span> "-javaagent:D:\java\IntelliJ IDEA Community Edition 2022.1\lib\idea_rt.jar=63089:D:\java\IntelliJ IDEA Community Edition 2022.1\bin"</div>
<div class="con" style="top:874px">2022-07-26</div>
<div class="con" style="top:907px">2022-07-26 16:11:48</div>
<div class="con" style="top:973px;color:#00007f">Process finished with exit code 0</div>
<div class="a" style="left:136px;top:1000px;width:953px;height:13px;background:#e6e6e6;border-right:1px solid #d4d4d4;border-bottom:1px solid #d9d9d9"></div>
<div class="a" style="left:1873px;top:838px;width:14px;height:142px;background:rgba(0,0,0,0.090);border:1px solid rgba(0,0,0,0.050)"></div>
<div class="a" style="left:1905px;top:857px;width:20px;height:88px;background:#4d555e;border-radius:4px;border:1px solid #3a4048"></div>
<div class="a" style="left:1911px;top:867px;width:7px;height:69px;background:repeating-linear-gradient(180deg,rgba(77,85,94,0) 0 2px,#4d555e 2px 3px),linear-gradient(180deg,#3a4048 0%,#3a4048 14%,#e8824a 16%,#e6b84a 45%,#7ac96a 70%,#3fc7c0 100%)"></div>
<div class="a" style="left:211px;top:1017px;width:83px;height:31px;background:#bdbdbd"></div>
<svg style="left:52px;top:1025px" width="14" height="18" viewBox="0 0 14 18"><g fill="none" stroke="#6e6e6e" stroke-width="2"><path d="M3.500 3v12M3.500 12c0-3 7-2 7-7"/></g><g fill="#6e6e6e"><circle cx="3.500" cy="3" r="2.500"/><circle cx="3.500" cy="15" r="2.500"/><circle cx="10.500" cy="4" r="2.500"/></g></svg>
<span id="b1" class="t " style="left:75.0px;top:1021.5px;height:30px;line-height:30px;font-size:17px;letter-spacing:0.286px;">Version Control</span>
<svg style="left:229px;top:1026px" width="12" height="15" viewBox="0 0 12 15"><path d="M0 0L12 7.5L0 15z" fill="#6e6e6e"/></svg>
<span id="b2" class="t " style="left:251.0px;top:1021.5px;height:30px;line-height:30px;font-size:17px;letter-spacing:0.3px;">Run</span>
<svg style="left:311px;top:1027px" width="17" height="13" viewBox="0 0 17 13"><g fill="#6e6e6e"><rect x="0" y="0" width="3" height="2.500"/><rect x="5" y="0" width="12" height="2.500"/><rect x="0" y="5" width="3" height="2.500"/><rect x="5" y="5" width="12" height="2.500"/><rect x="0" y="10" width="3" height="2.500"/><rect x="5" y="10" width="12" height="2.500"/></g></svg>
<span id="b3" class="t " style="left:335.0px;top:1021.5px;height:30px;line-height:30px;font-size:17px;letter-spacing:-0.333px;">TODO</span>
<svg style="left:413px;top:1025px" width="16" height="16" viewBox="0 0 16 16"><circle cx="8" cy="8" r="8" fill="#6e6e6e"/><path d="M8 3.500v5.500M8 10.800v2" stroke="#f2f2f2" stroke-width="2.200"/></svg>
<span id="b4" class="t " style="left:436.0px;top:1021.5px;height:30px;line-height:30px;font-size:17px;letter-spacing:0.143px;">Problems</span>
<svg style="left:540px;top:1026px" width="17" height="15" viewBox="0 0 17 15"><rect width="17" height="15" fill="#6e6e6e"/><path d="M3 3.500l4 3.500-4 3.500M8.500 11.500h5.500" fill="none" stroke="#f2f2f2" stroke-width="1.600"/></svg>
<span id="b5" class="t " style="left:564.6px;top:1021.5px;height:30px;line-height:30px;font-size:17px;letter-spacing:0.2px;">Terminal</span>
<svg style="left:661px;top:1025px" width="20" height="17" viewBox="0 0 20 17"><path d="M5 0h10l5 8.500-5 8.500H5L0 8.500z" fill="#6e6e6e"/><path d="M7.500 4.500l7 4-7 4z" fill="#f2f2f2"/></svg>
<span id="b6" class="t " style="left:686.0px;top:1021.5px;height:30px;line-height:30px;font-size:16px;letter-spacing:-0.057px;">Services</span>
<svg style="left:774px;top:1025px" width="22" height="20" viewBox="0 0 26 24"><g stroke="#6e6e6e" fill="none"><path d="M3 10.500L13.500 2.500" stroke-width="5.200"/><path d="M10.500 8.500L23 21" stroke-width="4.600"/></g><path d="M11 1h4l-1 3z" fill="#6e6e6e"/></svg>
<span id="b7" class="t " style="left:800.0px;top:1021.5px;height:30px;line-height:30px;font-size:17px;letter-spacing:0.375px;">Build</span>
<svg style="left:9px;top:1055px" width="17" height="17" viewBox="0 0 17 17"><path d="M3.500 0.500h13v13h-13z" fill="none" stroke="#6e6e6e" stroke-width="1"/><path d="M0.500 3.500v13h13" fill="none" stroke="#6e6e6e" stroke-width="1"/></svg>
<span id="st" class="t " style="left:40.0px;top:1050.0px;height:30px;line-height:30px;font-size:19px;letter-spacing:0.1px;">Build completed successfully in 6 sec, 453 ms (2 minutes ago)</span>
<span id="s1" class="t " style="left:1588.4px;top:1050.0px;height:30px;line-height:30px;font-size:19px;letter-spacing:0.4px;">8:16</span>
<span id="s2" class="t " style="left:1643.0px;top:1050.0px;height:30px;line-height:30px;font-size:17.5px;letter-spacing:-0.433px;">CRLF</span>
<span id="s3" class="t " style="left:1705.0px;top:1050.0px;height:30px;line-height:30px;font-size:19px;letter-spacing:-0.325px;">UTF-8</span>
<span id="s4" class="t " style="left:1779.4px;top:1050.0px;height:30px;line-height:30px;font-size:18px;letter-spacing:-0.443px;">4 spaces</span>
<svg style="left:1870px;top:1058px" width="14" height="14" viewBox="0 0 14 14"><rect x="0.500" y="6" width="12.500" height="8" fill="#6e6e6e"/><path d="M7.500 6V3.800a2.700 2.700 0 0 1 5.400 0" fill="none" stroke="#6e6e6e" stroke-width="1.800"/></svg>
<span id="wm" class="t " style="left:1716.8px;top:1047.0px;height:30px;line-height:30px;font-size:18.5px;letter-spacing:0.445px;color:rgba(120,120,120,0.550);font-family:'Liberation Sans','Noto Sans CJK SC',sans-serif">CSDN @小丫头爱学习</span>
</body></html>
